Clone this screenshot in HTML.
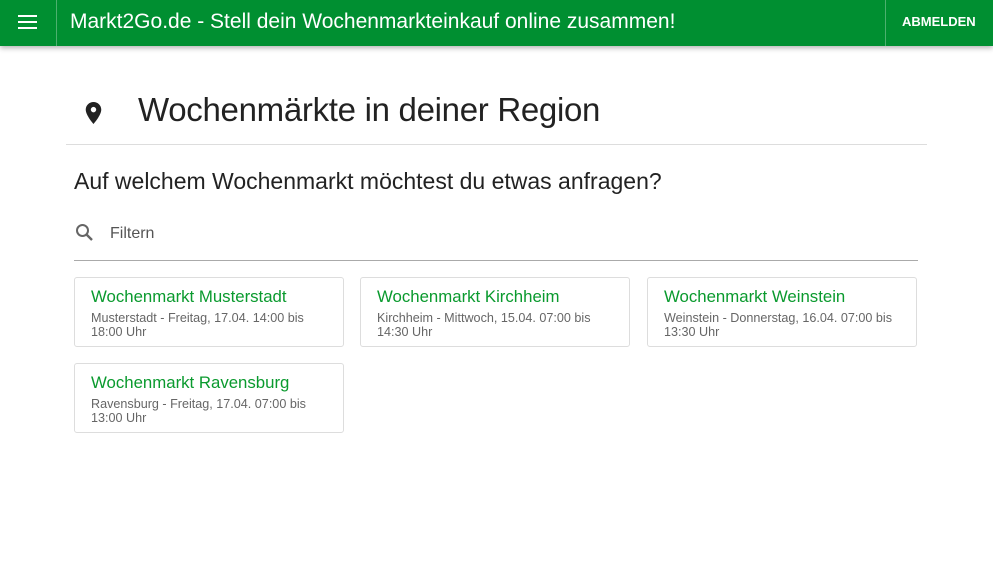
<!DOCTYPE html>
<html><head><meta charset="utf-8"><style>
*{box-sizing:border-box;margin:0;padding:0}
body{width:993px;height:583px;background:#fff;font-family:"Liberation Sans",sans-serif;position:relative;overflow:hidden}
.bar{position:absolute;left:0;top:0;width:993px;height:46px;background:#008f31;box-shadow:0 2px 5px rgba(0,0,0,.3)}
.sep{position:absolute;top:0;width:1px;height:46px;background:rgba(255,255,255,.3)}
.title{position:absolute;left:70px;top:10px;color:#fff;font-size:21px}
.abm{position:absolute;left:902px;top:14px;color:#fff;font-size:13px;font-weight:bold}
.h1{position:absolute;left:138px;top:91px;font-size:33px;color:#222;font-weight:300;letter-spacing:-0.3px}
.hr{position:absolute;left:66px;top:144px;width:861px;height:1px;background:#ddd}
.h2{position:absolute;left:74px;top:168px;font-size:23px;color:#222}
.filt{position:absolute;left:110px;top:225px;font-size:16px;color:#555}
.line{position:absolute;left:74px;top:260px;width:844px;height:1px;background:#aaa}
.card{position:absolute;width:270px;height:70px;border:1px solid #ddd;border-radius:3px;padding:9px 16px}
.card b{display:block;font-weight:normal;color:#0a9a2e;font-size:16.8px;margin-bottom:4px}
.card span{display:block;font-size:12.6px;color:#666;line-height:14px}
</style></head><body>
<div class="bar">
<svg style="position:absolute;left:18px;top:14px" width="20" height="16"><rect y="1" width="19" height="2" fill="#fff"/><rect y="7" width="19" height="2" fill="#fff"/><rect y="13" width="19" height="2" fill="#fff"/></svg>
<div class="sep" style="left:56px"></div>
<div class="title">Markt2Go.de - Stell dein Wochenmarkteinkauf online zusammen!</div>
<div class="sep" style="left:885px"></div>
<div class="abm">ABMELDEN</div>
</div>
<svg style="position:absolute;left:85px;top:102px" width="17" height="22" viewBox="0 0 12 17"><path d="M6 0C2.7 0 0 2.6 0 5.9 0 10.3 6 17 6 17s6-6.7 6-11.1C12 2.6 9.3 0 6 0zm0 8a2.1 2.1 0 1 1 0-4.2A2.1 2.1 0 0 1 6 8z" fill="#222"/></svg>
<div class="h1">Wochenmärkte in deiner Region</div>
<div class="hr"></div>
<div class="h2">Auf welchem Wochenmarkt möchtest du etwas anfragen?</div>
<svg style="position:absolute;left:75px;top:223px" width="20" height="20" viewBox="0 0 20 20"><circle cx="7.5" cy="7.5" r="5.5" stroke="#666" stroke-width="2" fill="none"/><path d="M11.5 11.5L17 17" stroke="#666" stroke-width="2.4"/></svg>
<div class="filt">Filtern</div>
<div class="line"></div>
<div class="card" style="left:74px;top:277px"><b>Wochenmarkt Musterstadt</b><span>Musterstadt - Freitag, 17.04. 14:00 bis<br>18:00 Uhr</span></div>
<div class="card" style="left:360px;top:277px"><b>Wochenmarkt Kirchheim</b><span>Kirchheim - Mittwoch, 15.04. 07:00 bis<br>14:30 Uhr</span></div>
<div class="card" style="left:647px;top:277px"><b>Wochenmarkt Weinstein</b><span>Weinstein - Donnerstag, 16.04. 07:00 bis<br>13:30 Uhr</span></div>
<div class="card" style="left:74px;top:363px"><b>Wochenmarkt Ravensburg</b><span>Ravensburg - Freitag, 17.04. 07:00 bis<br>13:00 Uhr</span></div>
</body></html>
